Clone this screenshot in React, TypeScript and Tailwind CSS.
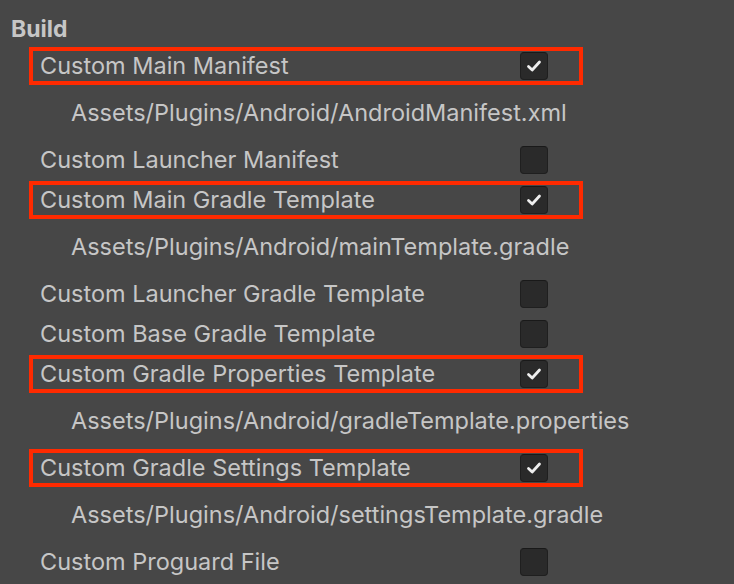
const ROWS: { label: string; checked?: boolean; marked?: boolean; path?: string }[] = [
  { label: 'Custom Main Manifest', checked: true, marked: true, path: 'Assets/Plugins/Android/AndroidManifest.xml' },
  { label: 'Custom Launcher Manifest' },
  { label: 'Custom Main Gradle Template', checked: true, marked: true, path: 'Assets/Plugins/Android/mainTemplate.gradle' },
  { label: 'Custom Launcher Gradle Template' },
  { label: 'Custom Base Gradle Template' },
  { label: 'Custom Gradle Properties Template', checked: true, marked: true, path: 'Assets/Plugins/Android/gradleTemplate.properties' },
  { label: 'Custom Gradle Settings Template', checked: true, marked: true, path: 'Assets/Plugins/Android/settingsTemplate.gradle' },
  { label: 'Custom Proguard File' },
];

function Checkbox({ checked }: { checked?: boolean }) {
  return (
    <div className="flex h-[28px] w-[28px] items-center justify-center rounded-[4px] border border-[#1f1f1f] border-t-[#191919] bg-[#2a2a2a]">
      {checked && (
        <svg width="18" height="18" viewBox="0 0 18 18" fill="none">
          <path d="M3.5 9.5 L7.2 13 L14.5 5" stroke="#eeeeee" strokeWidth="2.8" strokeLinecap="round" strokeLinejoin="round" />
        </svg>
      )}
    </div>
  );
}

export default function App() {
  return (
    <div
      className="h-[584px] w-[734px] overflow-hidden bg-[#474747] text-[23.5px] leading-[30px] text-[#c6c6c6]"
      style={{ fontFamily: 'Inter, "Noto Sans", sans-serif' }}
    >
      <div className="h-[46px] pl-[11px] pt-[14px] text-[23px] font-bold">Build</div>
      {ROWS.map((row) => (
        <div key={row.label}>
          <div className="relative flex h-[40px] items-center pl-[40px]">
            <span className="w-[480px]">{row.label}</span>
            <Checkbox checked={row.checked} />
            {/* red annotation frame */}
            {row.marked && (
              <div className="absolute left-[29px] top-[1px] h-[38px] w-[554px] border-4 border-[#ff2a00]" />
            )}
          </div>
          {row.path && (
            <div className="flex h-[54px] items-center pl-[71px]">{row.path}</div>
          )}
        </div>
      ))}
    </div>
  );
}
